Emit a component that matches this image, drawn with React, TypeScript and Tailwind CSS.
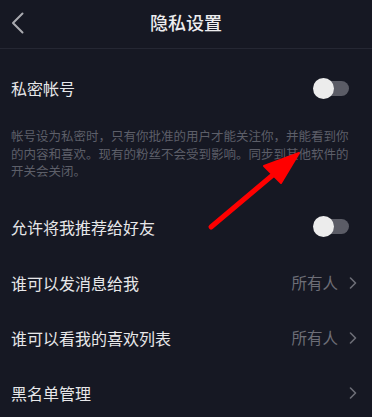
import React from "react";

const font = { fontFamily: '"Noto Sans CJK SC", "Noto Sans", sans-serif' };

function Toggle() {
  return (
    <div className="relative w-[36px] h-[22px] flex items-center">
      <div className="absolute left-[4px] right-0 h-[15px] rounded-full bg-[#5b5c66]" />
      <div className="absolute left-0 w-[21px] h-[21px] rounded-full bg-[#ececec]" />
    </div>
  );
}

function Chevron() {
  return (
    <svg width="8" height="12" viewBox="0 0 8 12" className="ml-[11px]">
      <path d="M1.5 1 L6.5 6 L1.5 11" fill="none" stroke="#6d6e77" strokeWidth="1.6" strokeLinecap="round" strokeLinejoin="round" />
    </svg>
  );
}

export default function App() {
  return (
    <div className="relative w-[372px] h-[417px] overflow-hidden bg-[#161823] text-[#e7e7e9]" style={font}>
      <div className="relative h-[49px] flex items-center justify-center border-b border-[#252733]">
        <svg width="14" height="22" viewBox="0 0 14 22" className="absolute left-[11px] top-[12px]">
          <path d="M11.5 1.5 L2 11 L11.5 20.5" fill="none" stroke="#a9aab0" strokeWidth="2" strokeLinecap="round" strokeLinejoin="round" />
        </svg>
        <div className="text-[18px] font-medium text-[#ededef] -mt-[3px]">隐私设置</div>
      </div>

      <div className="h-[78px] flex items-center justify-between pl-[11px] pr-[23px]">
        <div className="text-[16px]">私密帐号</div>
        <Toggle />
      </div>

      <div className="pl-[11px] text-[12.5px] leading-[17.5px] text-[#5d5f69] whitespace-nowrap">
        <div>帐号设为私密时，只有你批准的用户才能关注你，并能看到你</div>
        <div>的内容和喜欢。现有的粉丝不会受到影响。同步到其他软件的</div>
        <div>开关会关闭。</div>
      </div>

      <div className="h-[56px] mt-[19px] flex items-center justify-between pl-[11px] pr-[23px]">
        <div className="text-[16px]">允许将我推荐给好友</div>
        <Toggle />
      </div>

      <div className="h-[56px] flex items-center justify-between pl-[11px] pr-[15px]">
        <div className="text-[16px]">谁可以发消息给我</div>
        <div className="flex items-center text-[15.5px] text-[#6d6e77]">所有人<Chevron /></div>
      </div>

      <div className="h-[55px] flex items-center justify-between pl-[11px] pr-[15px]">
        <div className="text-[16px]">谁可以看我的喜欢列表</div>
        <div className="flex items-center text-[15.5px] text-[#6d6e77]">所有人<Chevron /></div>
      </div>

      <div className="h-[55px] flex items-center justify-between pl-[11px] pr-[15px]">
        <div className="text-[16px]">黑名单管理</div>
        <Chevron />
      </div>

      <svg className="absolute left-0 top-0 pointer-events-none" width="372" height="417" viewBox="0 0 372 417">
        <line x1="211" y1="227" x2="274" y2="174" stroke="#ff0000" strokeWidth="5" strokeLinecap="round" />
        <polygon points="299,153 264,166 281,183" fill="#ff0000" stroke="#ff0000" strokeWidth="2" strokeLinejoin="round" />
      </svg>
    </div>
  );
}
